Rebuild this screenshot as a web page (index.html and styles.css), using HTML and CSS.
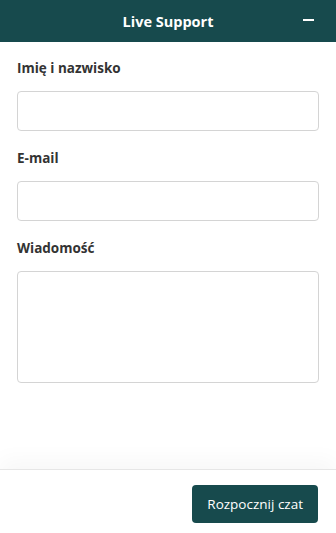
FILE: index.html
```html
<!DOCTYPE html>
<html lang="pl">
<head>
  <meta charset="UTF-8">
  <title>Live Support</title>
  <link rel="stylesheet" href="styles.css">
</head>
<body>

  <div class="chat">
    <div class="chat-header">
      <span class="chat-title">Live Support</span>
      <button class="minimize" aria-label="Minimize"></button>
    </div>

    <form class="chat-form">
      <label class="field">
        <span class="field-label">Imię i nazwisko</span>
        <input type="text" class="field-input">
      </label>
      <label class="field">
        <span class="field-label">E-mail</span>
        <input type="email" class="field-input">
      </label>
      <label class="field">
        <span class="field-label">Wiadomość</span>
        <textarea class="field-input field-textarea"></textarea>
      </label>
    </form>

    <div class="chat-footer">
      <button class="start-btn">Rozpocznij czat</button>
    </div>
  </div>

</body>
</html>
```

FILE: styles.css
```css
* {
  box-sizing: border-box;
}

body {
  margin: 0;
  font-family: 'Open Sans', 'Noto Sans', sans-serif;
  background: #fff;
  color: #333;
}

.chat {
  display: flex;
  flex-direction: column;
  height: 100vh;
}

.chat-header {
  position: relative;
  height: 42px;
  background: #174a4d;
  display: flex;
  align-items: center;
  justify-content: center;
}

.chat-title {
  color: #fff;
  font-size: 14.5px;
  font-weight: 700;
}

.minimize {
  position: absolute;
  right: 22px;
  top: 19px;
  width: 11px;
  height: 2px;
  padding: 0;
  border: none;
  background: #fff;
}

.chat-form {
  flex: 1;
  padding: 16px 17px 0;
  display: flex;
  flex-direction: column;
  gap: 17px;
}

.field {
  display: flex;
  flex-direction: column;
  gap: 13px;
}

.field-label {
  font-size: 13.5px;
  font-weight: 700;
  color: #333;
  line-height: 20px;
}

.field-input {
  width: 100%;
  height: 40px;
  border: 1px solid #d4d4d4;
  border-radius: 4px;
  font: inherit;
  padding: 8px 10px;
  resize: none;
}

.field-textarea {
  height: 112px;
}

.chat-footer {
  border-top: 1px solid #e6e6e6;
  box-shadow: 0 -10px 20px rgba(0, 0, 0, 0.03);
  padding: 15px 18px 10px;
  display: flex;
  justify-content: flex-end;
}

.start-btn {
  background: #174a4d;
  color: #fff;
  border: none;
  border-radius: 4px;
  height: 38px;
  padding: 0 15px;
  font-family: inherit;
  font-size: 13.5px;
}
```
